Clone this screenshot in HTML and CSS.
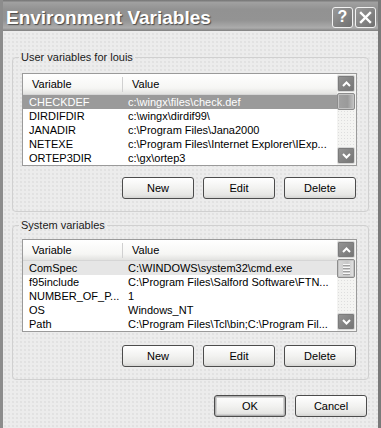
FILE: index.html
```html
<!DOCTYPE html>
<html lang="en">
<head>
    <meta charset="UTF-8">
    <title>Environment Variables</title>
    <link rel="stylesheet" href="styles.css">
</head>
<body>

    <div class="window">
        <div class="titlebar">
            <span class="title">Environment Variables</span>
            <div class="caption-buttons">
                <span class="cap-btn help">?</span>
                <span class="cap-btn">
                    <svg width="13" height="13" viewBox="0 0 13 13">
                        <path d="M2 2 L11 11 M11 2 L2 11" stroke="#fff" stroke-width="2.4" stroke-linecap="square"/>
                    </svg>
                </span>
            </div>
        </div>

        <div class="content">
            <fieldset class="group user-group">
                <legend>User variables for louis</legend>
                <div class="list">
                    <div class="list-main">
                        <div class="list-head"><span>Variable</span><span>Value</span></div>
                        <div class="row selected"><span>CHECKDEF</span><span>c:\wingx\files\check.def</span></div>
                        <div class="row"><span>DIRDIFDIR</span><span>c:\wingx\dirdif99\</span></div>
                        <div class="row"><span>JANADIR</span><span>c:\Program Files\Jana2000</span></div>
                        <div class="row"><span>NETEXE</span><span>c:\Program Files\Internet Explorer\IExp...</span></div>
                        <div class="row"><span>ORTEP3DIR</span><span>c:\gx\ortep3</span></div>
                    </div>
                    <div class="scrollbar">
                        <div class="sb-btn">
                            <svg width="9" height="6" viewBox="0 0 9 6"><path d="M1 5 L4.5 1.5 L8 5" fill="none" stroke="#fff" stroke-width="2"/></svg>
                        </div>
                        <div class="sb-thumb"></div>
                        <div class="sb-track"></div>
                        <div class="sb-btn">
                            <svg width="9" height="6" viewBox="0 0 9 6"><path d="M1 1 L4.5 4.5 L8 1" fill="none" stroke="#fff" stroke-width="2"/></svg>
                        </div>
                    </div>
                </div>
                <div class="btn-row">
                    <button>New</button>
                    <button>Edit</button>
                    <button>Delete</button>
                </div>
            </fieldset>

            <fieldset class="group sys-group">
                <legend>System variables</legend>
                <div class="list">
                    <div class="list-main">
                        <div class="list-head"><span>Variable</span><span>Value</span></div>
                        <div class="row inactive"><span>ComSpec</span><span>C:\WINDOWS\system32\cmd.exe</span></div>
                        <div class="row"><span>f95include</span><span>C:\Program Files\Salford Software\FTN...</span></div>
                        <div class="row"><span>NUMBER_OF_P...</span><span>1</span></div>
                        <div class="row"><span>OS</span><span>Windows_NT</span></div>
                        <div class="row"><span>Path</span><span>C:\Program Files\Tcl\bin;C:\Program Fil...</span></div>
                    </div>
                    <div class="scrollbar">
                        <div class="sb-btn">
                            <svg width="9" height="6" viewBox="0 0 9 6"><path d="M1 5 L4.5 1.5 L8 5" fill="none" stroke="#fff" stroke-width="2"/></svg>
                        </div>
                        <div class="sb-thumb grip"><i></i><i></i><i></i><i></i></div>
                        <div class="sb-track"></div>
                        <div class="sb-btn">
                            <svg width="9" height="6" viewBox="0 0 9 6"><path d="M1 1 L4.5 4.5 L8 1" fill="none" stroke="#fff" stroke-width="2"/></svg>
                        </div>
                    </div>
                </div>
                <div class="btn-row">
                    <button>New</button>
                    <button>Edit</button>
                    <button>Delete</button>
                </div>
            </fieldset>

            <div class="dialog-buttons">
                <button class="default">OK</button>
                <button>Cancel</button>
            </div>
        </div>
    </div>

</body>
</html>
```

FILE: styles.css
```css
* {
    box-sizing: border-box;
}

body {
    margin: 0;
    font-family: "Liberation Sans", Arial, sans-serif;
    font-size: 11px;
    background: #ececec;
}

.window {
    width: 381px;
    height: 428px;
    border-left: 3px solid #8c8c8c;
    border-right: 3px solid #7a7a7a;
    background-color: #ececec;
    background-image: radial-gradient(circle, #dcdcdc 0.6px, transparent 0.9px);
    background-size: 4px 4px;
    overflow: hidden;
}

.titlebar {
    height: 31px;
    margin: 0 -3px;
    padding: 0 5px 0 6px;
    display: flex;
    align-items: center;
    justify-content: space-between;
    background: linear-gradient(#727272, #a0a0a0 8%, #929292 30%, #939393 65%, #acacac 90%, #808080);
}

.title {
    font-weight: bold;
    font-size: 19px;
    color: #fff;
    text-shadow: 1px 1px 1px #4a4a4a;
    margin-top: 4px;
}

.caption-buttons {
    display: flex;
    gap: 2px;
    margin-top: 3px;
}

.cap-btn {
    width: 21px;
    height: 21px;
    display: flex;
    align-items: center;
    justify-content: center;
    border: 1px solid #f2f2f2;
    border-radius: 3px;
    background: linear-gradient(135deg, #9a9a9a, #707070);
    color: #fff;
    font-weight: bold;
    font-size: 16px;
}

.content {
    display: flex;
    flex-direction: column;
}

.group {
    margin: 0 9px;
    min-width: 0;
    border: 1px solid #d0d0d0;
    border-radius: 4px;
    padding: 9px 11px 12px 9px;
}

.group legend {
    margin-left: -3px;
    padding: 0 2px;
    line-height: 13px;
    color: #1a1a1a;
}

.user-group {
    margin-top: 20px;
}

.sys-group {
    margin-top: 7px;
    padding-top: 7px;
}

.list {
    display: flex;
    height: 93px;
    border: 1px solid #9a9a9a;
    background: #fff;
}

.list-main {
    flex: 1;
}

.list-head {
    display: grid;
    grid-template-columns: 99px 1fr;
    height: 21px;
    align-items: center;
    background: linear-gradient(#fff, #f6f6f4 70%, #e2e2e0);
    border-bottom: 1px solid #d6d6d6;
}

.list-head span {
    padding-left: 9px;
}

.list-head span + span {
    border-left: 1px solid #d0d0d0;
    height: 15px;
    line-height: 15px;
    padding-left: 9px;
}

.row {
    display: grid;
    grid-template-columns: 99px 1fr;
    height: 14px;
    line-height: 14px;
    white-space: nowrap;
}

.row span {
    padding-left: 6px;
    overflow: hidden;
}

.row.selected {
    background: #9a9a9a;
    color: #fff;
}

.row.inactive {
    background: #e6e6e6;
}

.scrollbar {
    width: 19px;
    display: flex;
    flex-direction: column;
    padding: 1px 1px 1px 0;
    background-color: #f4f4f2;
    background-image: radial-gradient(circle, #dedede 0.6px, transparent 0.9px);
    background-size: 3px 3px;
}

.sb-btn {
    height: 17px;
    display: flex;
    align-items: center;
    justify-content: center;
    border: 1px solid #d8d8d8;
    border-radius: 2px;
    background: linear-gradient(135deg, #959595, #747474);
    box-shadow: inset 0 0 0 1px #7c7c7c;
}

.sb-thumb {
    height: 17px;
    margin-top: 1px;
    border: 1px solid #8c8c8c;
    border-radius: 2px;
    background: linear-gradient(90deg, #a2a2a2, #9a9a9a 60%, #c4c4c4);
    box-shadow: inset 0 0 0 1px #c4c4c4;
}

.sb-thumb.grip {
    height: 19px;
    display: flex;
    flex-direction: column;
    justify-content: center;
    align-items: center;
    gap: 2px;
    background: linear-gradient(90deg, #d8d8d8, #c8c8c8 60%, #e4e4e4);
}

.sb-thumb.grip i {
    display: block;
    width: 7px;
    height: 1px;
    background: #f8f8f8;
    box-shadow: 0 1px 0 #a0a0a0;
}

.sb-track {
    flex: 1;
}

.btn-row {
    display: flex;
    justify-content: flex-end;
    gap: 9px;
    padding-right: 1px;
    margin-top: 11px;
}

.sys-group .btn-row {
    margin-top: 13px;
}

button {
    width: 72px;
    height: 22px;
    padding: 0;
    font-family: inherit;
    font-size: 11px;
    color: #000;
    border: 1px solid #4c4c4c;
    border-radius: 3px;
    background: linear-gradient(#ffffff, #f2f2f0 50%, #e6e6e4 85%, #d4d4d2);
}

button.default {
    box-shadow: inset 0 0 0 1px #b0b0b0, inset 0 0 0 2px #d0d0d0;
}

.dialog-buttons {
    display: flex;
    justify-content: flex-end;
    gap: 9px;
    margin-top: 15px;
    padding-right: 11px;
}
```
